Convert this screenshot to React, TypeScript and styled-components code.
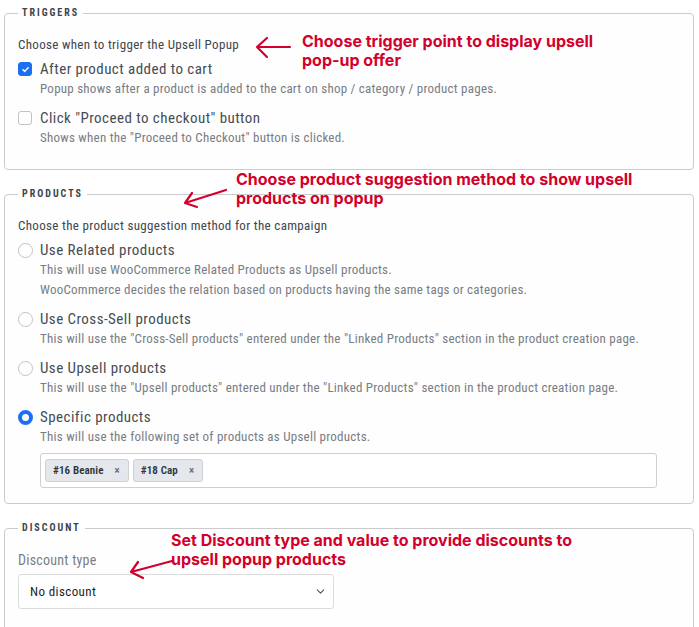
import React from "react";
import styled, { createGlobalStyle } from "styled-components";
import { ChevronDown } from "lucide-react";

const GlobalStyle = createGlobalStyle`
  * { box-sizing: border-box; }
  body {
    margin: 0;
    background: #ffffff;
    font-family: "Roboto Condensed", Roboto, sans-serif;
    letter-spacing: 0.015em;
    color: #50575e;
  }
`;

const Page = styled.div`
  position: relative;
  width: 699px;
  height: 627px;
  overflow: hidden;
  padding: 6px 5px 0 4px;
`;

const Section = styled.fieldset<{ $bottom?: number }>`
  margin: 0 0 17px;
  border: 1px solid #cbcbcb;
  border-radius: 4px;
  padding: 16px 13px ${(p) => p.$bottom ?? 20}px;
  min-width: 0;
  background: #fefefe;
`;

const Legend = styled.legend`
  padding: 0 4px;
  font-size: 10px;
  line-height: 14px;
  font-weight: 700;
  letter-spacing: 2px;
  color: #3c434a;
  text-transform: uppercase;
`;

const Intro = styled.div`
  font-size: 13px;
  line-height: 18px;
  font-weight: 400;
  letter-spacing: 0.025em;
  color: #3f464d;
  margin-bottom: 5px;
`;

const Options = styled.div`
  display: flex;
  flex-direction: column;
  gap: 9px;
`;

const Option = styled.label`
  display: grid;
  grid-template-columns: 22px 1fr;
  cursor: pointer;
`;

const ControlCell = styled.span`
  height: 20px;
  display: flex;
  align-items: center;
`;

const Checkbox = styled.span<{ $checked?: boolean }>`
  width: 14px;
  height: 14px;
  border-radius: 3px;
  display: flex;
  align-items: center;
  justify-content: center;
  background: ${(p) => (p.$checked ? "#1d6ff2" : "#ffffff")};
  border: 1px solid ${(p) => (p.$checked ? "#1d6ff2" : "#bfc2c6")};
`;

const Radio = styled.span<{ $checked?: boolean }>`
  width: 15px;
  height: 15px;
  border-radius: 50%;
  background: #ffffff;
  border: ${(p) => (p.$checked ? "4.5px solid #1d6ff2" : "1px solid #bfc2c6")};
`;

const OptionBody = styled.span`
  display: flex;
  flex-direction: column;
`;

const OptionTitle = styled.span`
  font-size: 15px;
  line-height: 20px;
  font-weight: 400;
  letter-spacing: 0.03em;
  color: #454c53;
`;

const OptionHint = styled.span`
  font-size: 13px;
  line-height: 20px;
  color: #787d83;
`;

const TagBox = styled.div`
  margin: 6px 0 0 22px;
  width: 617px;
  height: 35px;
  border: 1px solid #cfcfcf;
  border-radius: 3px;
  background: #ffffff;
  padding: 0 4px;
  display: flex;
  align-items: center;
  gap: 4px;
`;

const Tag = styled.span`
  height: 23px;
  display: inline-flex;
  align-items: center;
  gap: 11px;
  padding: 0 8px 0 7px;
  background: #e4e7eb;
  border: 1px solid #cdd1d6;
  border-radius: 3px;
  font-size: 11px;
  font-weight: 600;
  letter-spacing: 0.01em;
  color: #2c3338;
`;

const TagRemove = styled.span`
  font-size: 11px;
  font-weight: 700;
  color: #6b7076;
`;

const FieldLabel = styled.div`
  font-size: 14px;
  line-height: 18px;
  color: #7a7f85;
  margin-bottom: 5px;
`;

const Select = styled.div`
  width: 316px;
  height: 35px;
  border: 1px solid #dcdcdc;
  border-radius: 3px;
  background: #ffffff;
  padding: 0 6px 0 11px;
  display: flex;
  align-items: center;
  justify-content: space-between;
  font-size: 13px;
  font-weight: 400;
  letter-spacing: 0.03em;
  color: #1e1e1e;
`;

const Note = styled.div<{ $x: number; $y: number }>`
  position: absolute;
  left: ${(p) => p.$x}px;
  top: ${(p) => p.$y}px;
  font-family: Inter, Roboto, sans-serif;
  font-size: 16px;
  line-height: 19px;
  font-weight: 700;
  letter-spacing: 0;
  color: #d3002c;
  white-space: nowrap;
`;

const Arrows = styled.svg`
  position: absolute;
  left: 0;
  top: 0;
  pointer-events: none;
`;

type Choice = { title: string; hint: string[]; checked?: boolean };

const triggers: Choice[] = [
  {
    title: "After product added to cart",
    hint: ["Popup shows after a product is added to the cart on shop / category / product pages."],
    checked: true,
  },
  {
    title: 'Click "Proceed to checkout" button',
    hint: ['Shows when the "Proceed to Checkout" button is clicked.'],
  },
];

const methods: Choice[] = [
  {
    title: "Use Related products",
    hint: [
      "This will use WooCommerce Related Products as Upsell products.",
      "WooCommerce decides the relation based on products having the same tags or categories.",
    ],
  },
  {
    title: "Use Cross-Sell products",
    hint: ['This will use the "Cross-Sell products" entered under the "Linked Products" section in the product creation page.'],
  },
  {
    title: "Use Upsell products",
    hint: ['This will use the "Upsell products" entered under the "Linked Products" section in the product creation page.'],
  },
  {
    title: "Specific products",
    hint: ["This will use the following set of products as Upsell products."],
    checked: true,
  },
];

const CheckMark = () => (
  <svg width="9" height="9" viewBox="0 0 10 10">
    <path d="M2.2 5.2 L4.2 7.1 L7.9 3" fill="none" stroke="#fff" strokeWidth="1.6" strokeLinecap="round" strokeLinejoin="round" />
  </svg>
);

const ChoiceBody = ({ item }: { item: Choice }) => (
  <OptionBody>
    <OptionTitle>{item.title}</OptionTitle>
    {item.hint.map((h) => (
      <OptionHint key={h}>{h}</OptionHint>
    ))}
  </OptionBody>
);

export default function App() {
  return (
    <Page>
      <GlobalStyle />

      <Section $bottom={21}>
        <Legend>Triggers</Legend>
        <Intro>Choose when to trigger the Upsell Popup</Intro>
        <Options>
          {triggers.map((t) => (
            <Option key={t.title}>
              <ControlCell>
                <Checkbox $checked={t.checked}>{t.checked && <CheckMark />}</Checkbox>
              </ControlCell>
              <ChoiceBody item={t} />
            </Option>
          ))}
        </Options>
      </Section>

      <Section $bottom={15}>
        <Legend>Products</Legend>
        <Intro>Choose the product suggestion method for the campaign</Intro>
        <Options>
          {methods.map((m) => (
            <Option key={m.title}>
              <ControlCell>
                <Radio $checked={m.checked} />
              </ControlCell>
              <ChoiceBody item={m} />
            </Option>
          ))}
        </Options>
        <TagBox>
          <Tag>
            #16 Beanie <TagRemove>×</TagRemove>
          </Tag>
          <Tag>
            #18 Cap <TagRemove>×</TagRemove>
          </Tag>
        </TagBox>
      </Section>

      <Section $bottom={40}>
        <Legend>Discount</Legend>
        <FieldLabel>Discount type</FieldLabel>
        <Select>
          No discount
          <ChevronDown size={13} strokeWidth={2} color="#50575e" />
        </Select>
      </Section>

      <Note $x={302} $y={32}>
        Choose trigger point to display upsell
        <br />
        pop-up offer
      </Note>
      <Note $x={236} $y={170}>
        Choose product suggestion method to show upsell
        <br />
        products on popup
      </Note>
      <Note $x={171} $y={531}>
        Set Discount type and value to provide discounts to
        <br />
        upsell popup products
      </Note>

      <Arrows width="699" height="627" viewBox="0 0 699 627">
        <g fill="none" stroke="#d3002c" strokeWidth="2.2" strokeLinecap="round" strokeLinejoin="round">
          <path d="M290 47 L257 47 M267 38 L257 47 L267 57" />
          <path d="M226 190 L185 203 M192 193 L185 203 L197 207" />
          <path d="M172 561 L131 572 M138 562 L131 572 L143 578" />
        </g>
      </Arrows>
    </Page>
  );
}
